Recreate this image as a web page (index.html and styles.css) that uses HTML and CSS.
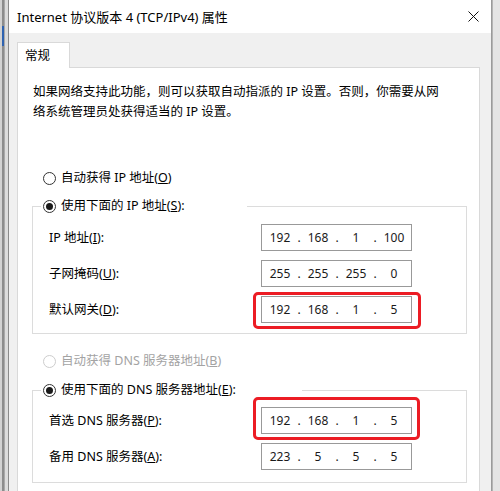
FILE: index.html
```html
<!DOCTYPE html>
<html lang="zh-CN">

<head>
    <meta charset="UTF-8">
    <meta name="viewport" content="width=device-width, initial-scale=1.0">
    <title>Internet 协议版本 4 (TCP/IPv4) 属性</title>
    <link rel="stylesheet" href="styles.css">
</head>

<body>
    <div class="screen">
        <div class="edge edge-left"></div>

        <div class="dialog">
            <div class="titlebar">
                <span class="title">Internet 协议版本 4 (TCP/IPv4) 属性</span>
                <svg class="close" width="11" height="11" viewBox="0 0 11 11">
                    <path d="M0.5 0.5 L10.5 10.5 M10.5 0.5 L0.5 10.5" stroke="#111" stroke-width="1" fill="none" />
                </svg>
            </div>

            <div class="dialog-body">
                <div class="tabs">
                    <div class="tab">常规</div>
                </div>

                <div class="panel">
                    <p class="intro">如果网络支持此功能，则可以获取自动指派的 IP 设置。否则，你需要从网<br>络系统管理员处获得适当的 IP 设置。</p>

                    <label class="radio-row radio-auto-ip">
                        <input type="radio" name="ip-mode">
                        <span>自动获得 IP 地址(<u>O</u>)</span>
                    </label>

                    <fieldset class="group group-ip">
                        <legend>
                            <label class="radio-row">
                                <input type="radio" name="ip-mode" checked>
                                <span>使用下面的 IP 地址(<u>S</u>):</span>
                            </label>
                        </legend>
                        <div class="field-grid">
                            <span class="field-label">IP 地址(<u>I</u>):</span>
                            <div class="ipbox">
                                <span class="seg">192</span><span class="dot">.</span>
                                <span class="seg">168</span><span class="dot">.</span>
                                <span class="seg">1</span><span class="dot">.</span>
                                <span class="seg">100</span>
                            </div>

                            <span class="field-label">子网掩码(<u>U</u>):</span>
                            <div class="ipbox">
                                <span class="seg">255</span><span class="dot">.</span>
                                <span class="seg">255</span><span class="dot">.</span>
                                <span class="seg">255</span><span class="dot">.</span>
                                <span class="seg">0</span>
                            </div>

                            <span class="field-label">默认网关(<u>D</u>):</span>
                            <div class="ipbox marked mark-gateway">
                                <span class="seg">192</span><span class="dot">.</span>
                                <span class="seg">168</span><span class="dot">.</span>
                                <span class="seg">1</span><span class="dot">.</span>
                                <span class="seg">5</span>
                            </div>
                        </div>
                    </fieldset>

                    <label class="radio-row radio-auto-dns disabled">
                        <input type="radio" name="dns-mode" disabled>
                        <span>自动获得 DNS 服务器地址(<u>B</u>)</span>
                    </label>

                    <fieldset class="group group-dns">
                        <legend>
                            <label class="radio-row">
                                <input type="radio" name="dns-mode" checked>
                                <span>使用下面的 DNS 服务器地址(<u>E</u>):</span>
                            </label>
                        </legend>
                        <div class="field-grid">
                            <span class="field-label">首选 DNS 服务器(<u>P</u>):</span>
                            <div class="ipbox marked mark-dns">
                                <span class="seg">192</span><span class="dot">.</span>
                                <span class="seg">168</span><span class="dot">.</span>
                                <span class="seg">1</span><span class="dot">.</span>
                                <span class="seg">5</span>
                            </div>

                            <span class="field-label">备用 DNS 服务器(<u>A</u>):</span>
                            <div class="ipbox">
                                <span class="seg">223</span><span class="dot">.</span>
                                <span class="seg">5</span><span class="dot">.</span>
                                <span class="seg">5</span><span class="dot">.</span>
                                <span class="seg">5</span>
                            </div>
                        </div>
                    </fieldset>
                </div>
            </div>
        </div>

        <div class="edge edge-right"></div>
    </div>
</body>

</html>
```

FILE: styles.css
```css
/* Reset */
* {
    margin: 0;
    padding: 0;
    box-sizing: border-box;
}

body {
    font-family: "Noto Sans", "Noto Sans CJK SC", sans-serif;
    font-size: 12.5px;
    color: #000;
    background-color: #d6d6d6;
}

.screen {
    display: flex;
    width: 500px;
    height: 491px;
    overflow: hidden;
}

/* window behind the dialog */
.edge {
    width: 8px;
    flex-shrink: 0;
}

.edge-left {
    background:
        linear-gradient(#2f63b0, #2f63b0) no-repeat 2px 26px / 2px 20px,
        linear-gradient(to right, #d2d2d2 0 2px, #8c8c8c 2px 4px, #a9a9a9 4px 5px, #dcdcdc 5px 8px);
}

.edge-right {
    background: linear-gradient(to right, #b4b4b4 0 1px, #e4e4e4 1px 8px);
}

/* Dialog */
.dialog {
    flex: 1;
    display: flex;
    flex-direction: column;
    border-left: 1px solid #8a8a8a;
    border-right: 1px solid #9a9a9a;
    background-color: #f0f0f0;
}

.titlebar {
    height: 33px;
    flex-shrink: 0;
    background-color: #fff;
    display: flex;
    align-items: center;
    justify-content: space-between;
    padding: 0 12px 0 8px;
}

.title {
    font-size: 13px;
    line-height: 18px;
}

.close {
    display: block;
}

.dialog-body {
    flex: 1;
    padding: 9px 11px 0 8px;
}

.tabs {
    display: flex;
}

.tab {
    position: relative;
    z-index: 1;
    width: 53px;
    height: 26px;
    margin-bottom: -1px;
    padding: 4px 0 0 7px;
    line-height: 18px;
    background-color: #fff;
    border: 1px solid #d9d9d9;
    border-bottom: none;
}

.panel {
    height: 460px;
    background-color: #fff;
    border: 1px solid #d9d9d9;
    padding: 14px 0 0 14px;
}

.intro {
    margin-left: 1px;
    line-height: 20px;
    white-space: nowrap;
}

/* radio buttons */
.radio-row {
    display: flex;
    align-items: center;
    gap: 5px;
    height: 20px;
    line-height: 20px;
    white-space: nowrap;
}

.radio-row input {
    appearance: none;
    -webkit-appearance: none;
    width: 13px;
    height: 13px;
    margin: 0;
    flex-shrink: 0;
    border: 1px solid #333;
    border-radius: 50%;
    background-color: #fff;
    display: grid;
    place-content: center;
}

.radio-row input:checked::before {
    content: "";
    width: 7px;
    height: 7px;
    border-radius: 50%;
    background-color: #1a1a1a;
}

.radio-row.disabled {
    color: #a3a3a3;
}

.radio-row.disabled input {
    border-color: #cdcdcd;
}

.radio-auto-ip {
    margin-top: 46px;
    padding-left: 11px;
}

.radio-auto-dns {
    margin-top: 17px;
    padding-left: 11px;
}

/* group boxes */
.group {
    width: 435px;
    min-width: 0;
    border: 1px solid #dcdcdc;
    padding: 8px 0 10px 16px;
}

.group legend {
    margin-left: -8px;
    padding: 0 2px;
}

.group-ip {
    margin-top: 8px;
}

.group-ip legend {
    width: 206px;
}

.group-dns {
    margin-top: 9px;
    padding-top: 7px;
    padding-bottom: 12px;
}

.group-dns legend {
    width: 261px;
}

.field-grid {
    display: grid;
    grid-template-columns: 212px 151px;
    row-gap: 9px;
    align-items: center;
}

.field-label {
    line-height: 20px;
    white-space: nowrap;
}

/* IP address boxes */
.ipbox {
    position: relative;
    height: 27px;
    display: flex;
    align-items: center;
    padding: 0 1px 0 2px;
    border: 1px solid #999;
    background-color: #fff;
    font-size: 12px;
    color: #1a1a1a;
}

.ipbox .seg {
    flex: 1;
    text-align: center;
}

.ipbox .dot {
    width: 6px;
    text-align: center;
}

/* red annotation boxes drawn over the fields */
.ipbox.marked::after {
    content: "";
    position: absolute;
    border: 3px solid #ec1c24;
    border-radius: 5px;
}

.mark-gateway::after {
    left: -9px;
    right: -10px;
    top: -5px;
    bottom: -7px;
}

.mark-dns::after {
    left: -9px;
    right: -9px;
    top: -11px;
    bottom: -7px;
}
```
